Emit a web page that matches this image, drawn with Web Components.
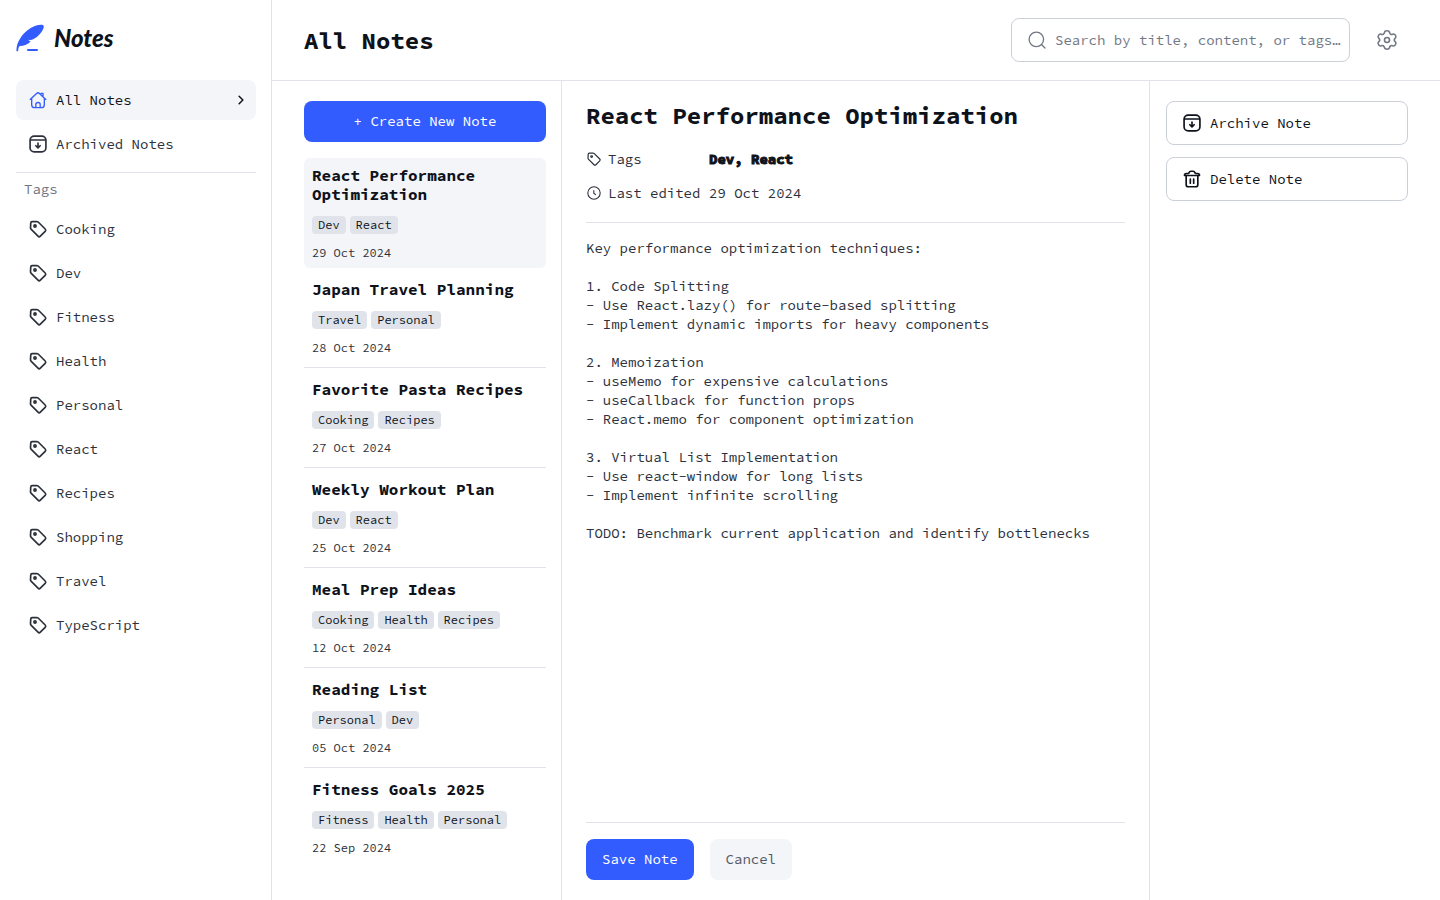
<!DOCTYPE html>
<html lang="en">
<head>
<meta charset="utf-8">
<meta name="viewport" content="width=device-width, initial-scale=1">
<title>Notes</title>
<style>
:root{--n950:#0e121b;--n800:#232530;--n700:#2b303b;--n600:#525866;--n500:#717784;--n300:#cacfd8;--n200:#e0e4ea;--n100:#f3f5f8;--blue:#335cff}
body{margin:0;background:#fff;color:var(--n950);font:14px/19px "Source Code Pro","Liberation Mono",monospace}
</style>
</head>
<body>
<notes-app></notes-app>
<script>
const BASE = `*{box-sizing:border-box}h1,h2,h3,p,ul,dl,dd{margin:0;padding:0}ul{list-style:none}a{color:inherit;text-decoration:none}button,input,textarea{font:inherit;color:inherit;margin:0}button{cursor:pointer}`;

class Base extends HTMLElement {
  connectedCallback() {
    if (this.shadowRoot) return;
    const t = document.createElement('template');
    t.innerHTML = `<style>${BASE}${this.css()}</style>${this.html()}`;
    this.attachShadow({ mode: 'open' }).append(t.content.cloneNode(true));
  }
}

const ICONS = {
  home: '<path d="M2.6 11.3 10.3 4.1Q12 2.6 13.7 4.1L21.4 11.3M4.4 10V17.6Q4.4 21.2 8 21.2H16Q19.6 21.2 19.6 17.6V10M9.4 21V17.2Q9.4 15 12 15T14.6 17.2V21M15.6 4H18V7.5"/>',
  archive: '<rect x="2.5" y="2.5" width="19" height="19" rx="5"/><path d="M3.2 7.2H20.8M12 11V16.2M9.4 14.1 12 16.6 14.6 14.1"/>',
  tag: '<path d="M3.3 4.9Q3.4 3.3 5 3.2L10.4 3Q11.6 3 12.5 3.9L20.6 12Q22 13.4 20.6 14.8L14.8 20.6Q13.4 22 12 20.6L3.9 12.5Q3 11.6 3 10.4Z"/><circle cx="8.4" cy="8.4" r="1.3"/>',
  chevron: '<path d="m9.5 7 5 5-5 5"/>',
  search: '<circle cx="11.2" cy="11.2" r="8.7"/><path d="m17.6 17.6 4 4"/>',
  clock: '<circle cx="12" cy="12" r="9.3"/><path d="M11.7 8.2V12.4L14.4 14.4"/>',
  trash: '<path d="M5 8V18.5Q5 21.3 7.8 21.3H16.2Q19 21.3 19 18.5V8M3 7.8Q3 5.4 5.2 5.4H7.2Q8 5.4 8.5 4.3 9.2 2.7 10.7 2.7H13.3Q14.8 2.7 15.5 4.3 16 5.4 16.8 5.4H18.8Q21 5.4 21 7.8ZM10 12V17M14 12V17"/>',
  gear: '<path d="M9.4 4.6C9.8 2.2 14.2 2.2 14.6 4.6C14.9 6.2 16.2 6.9 17.7 6.2C20 5.2 22 8.8 20.2 10.3C18.9 11.4 18.9 12.6 20.2 13.7C22 15.2 20 18.8 17.7 17.8C16.2 17.1 14.9 17.8 14.6 19.4C14.2 21.8 9.8 21.8 9.4 19.4C9.1 17.8 7.8 17.1 6.3 17.8C4 18.8 2 15.2 3.8 13.7C5.1 12.6 5.1 11.4 3.8 10.3C2 8.8 4 5.2 6.3 6.2C7.8 6.9 9.1 6.2 9.4 4.6Z"/><circle cx="12" cy="12" r="2.5"/>'
};

customElements.define('app-icon', class extends Base {
  css() { return `:host{display:block;flex:none;width:20px;height:20px}svg{display:block;width:100%;height:100%;fill:none;stroke:currentColor;stroke-width:${this.getAttribute('stroke') || 2};stroke-linecap:round;stroke-linejoin:round}`; }
  html() { return `<svg viewBox="0 0 24 24" aria-hidden="true">${ICONS[this.getAttribute('name')]}</svg>`; }
});

customElements.define('app-logo', class extends Base {
  css() { return `:host{display:block}a{display:flex;align-items:center;gap:10px;height:28px;font:italic 900 24px/28px Lato,sans-serif;color:var(--n950)}svg{width:28px;height:28px;fill:var(--blue)}`; }
  html() { return `<a href="#"><svg viewBox="0 0 28 28" aria-hidden="true"><path d="M.4 26.4C.5 21.5 2 17.6 4.2 14.4 7.6 8.6 13.6 4 19.4 1.8 22.2.8 25 .5 26.8.9 28 1.5 28 3 27.2 5 25.4 9.4 21.6 12.9 17.6 15 15.8 16 14 16.1 12.3 15.7 12.6 16.6 13.6 17.2 14.8 17.3 12.4 20.4 8 22 3.8 22 2.6 23 2.3 24.4 2.2 26.4 2 27.6.6 27.6.4 26.4Z"/><rect x="11" y="25" width="11" height="2" rx="1"/></svg><span>Notes</span></a>`; }
});

customElements.define('nav-item', class extends Base {
  css() { return `:host{display:block}a{display:flex;align-items:center;gap:8px;height:40px;padding:0 6px 0 12px;border-radius:8px;color:var(--n700)}span{flex:1}
    :host([active]) a{background:var(--n100);color:var(--n950)}:host([active]) .lead{color:var(--blue)}app-icon.end{width:18px;height:18px}`; }
  html() { return `<a href="#"><app-icon class="lead" name="${this.getAttribute('icon')}" ${this.hasAttribute('active') ? 'stroke="1.6"' : ''}></app-icon><span><slot></slot></span>${this.hasAttribute('active') ? '<app-icon class="end" name="chevron"></app-icon>' : ''}</a>`; }
});

customElements.define('app-sidebar', class extends Base {
  css() { return `:host{display:block;border-right:1px solid var(--n200);padding:24px 15px 24px 16px}nav{padding-top:28px}ul{display:grid;gap:4px}
    h2{font-size:14px;line-height:19px;font-weight:400;color:var(--n500);margin:8px 0 10px;padding:7px 8px 0;border-top:1px solid var(--n200)}`; }
  html() {
    const tags = ['Cooking', 'Dev', 'Fitness', 'Health', 'Personal', 'React', 'Recipes', 'Shopping', 'Travel', 'TypeScript'];
    return `<app-logo></app-logo><nav><ul><li><nav-item icon="home" active>All Notes</nav-item></li><li><nav-item icon="archive">Archived Notes</nav-item></li></ul>
    <h2>Tags</h2><ul>${tags.map(t => `<li><nav-item icon="tag">${t}</nav-item></li>`).join('')}</ul></nav>`;
  }
});

customElements.define('app-header', class extends Base {
  css() { return `:host{display:flex;align-items:center;gap:16px;min-height:81px;padding:0 32px;border-bottom:1px solid var(--n200)}h1{flex:1;font-size:24px;line-height:29px;font-weight:700}
    label{display:flex;align-items:center;gap:8px;width:339px;height:44px;padding:0 4px 0 15px;border:1px solid var(--n300);border-radius:8px;color:var(--n500)}
    input{flex:1;min-width:0;border:0;padding:0;outline:0;background:none;text-overflow:ellipsis}input::placeholder{color:var(--n500);opacity:1}
    button{display:grid;place-items:center;width:42px;height:42px;padding:0;border:0;background:none;color:var(--n500)}button app-icon{width:24px;height:24px}`; }
  html() { return `<h1>All Notes</h1><label><app-icon name="search" stroke="1.6"></app-icon><input type="text" aria-label="Search notes" placeholder="Search by title, content, or tags…"></label><button type="button" aria-label="Settings"><app-icon name="gear" stroke="1.6"></app-icon></button>`; }
});

customElements.define('app-button', class extends Base {
  css() { return `:host{display:block}button{display:flex;align-items:center;justify-content:center;gap:8px;width:100%;min-height:41px;padding:0 16px;border:0;border-radius:8px;background:var(--blue);color:#fff;white-space:nowrap}
    :host([kind=muted]) button{background:var(--n100);color:var(--n600)}
    :host([kind=outline]) button{justify-content:flex-start;min-height:44px;padding:0 15px;border:1px solid var(--n300);background:#fff;color:var(--n950)}`; }
  html() { const i = this.getAttribute('icon'); return `<button type="button">${i ? `<app-icon name="${i}"></app-icon>` : ''}<slot></slot></button>`; }
});

customElements.define('note-card', class extends Base {
  css() { return `:host{display:block}a{display:grid;gap:12px;padding:8px;border-radius:6px}:host([active]) a{background:var(--n100)}
    h3{font-size:16px;line-height:19px;font-weight:700}div{display:flex;flex-wrap:wrap;gap:4px;font-size:12px;line-height:14px}
    div span{padding:2px 6px;border-radius:4px;background:var(--n200)}time{font-size:12px;line-height:14px;color:var(--n700)}`; }
  html() { return `<a href="#"><h3><slot></slot></h3><div>${this.getAttribute('tags').split(',').map(t => `<span>${t}</span>`).join('')}</div><time>${this.getAttribute('date')}</time></a>`; }
});

customElements.define('note-list', class extends Base {
  css() { return `:host{display:block;padding:20px 15px 20px 32px;border-right:1px solid var(--n200)}ul{margin-top:16px}li+li{padding:4px 0;border-bottom:1px solid var(--n200)}li:last-child{border-bottom:0}`; }
  html() {
    const notes = [
      ['React Performance Optimization', 'Dev,React', '29 Oct 2024'],
      ['Japan Travel Planning', 'Travel,Personal', '28 Oct 2024'],
      ['Favorite Pasta Recipes', 'Cooking,Recipes', '27 Oct 2024'],
      ['Weekly Workout Plan', 'Dev,React', '25 Oct 2024'],
      ['Meal Prep Ideas', 'Cooking,Health,Recipes', '12 Oct 2024'],
      ['Reading List', 'Personal,Dev', '05 Oct 2024'],
      ['Fitness Goals 2025', 'Fitness,Health,Personal', '22 Sep 2024']
    ];
    return `<app-button>+ Create New Note</app-button><ul>${notes.map(([t, g, d], i) => `<li><note-card tags="${g}" date="${d}"${i ? '' : ' active'}>${t}</note-card></li>`).join('')}</ul>`;
  }
});

customElements.define('note-editor', class extends Base {
  css() { return `:host{display:flex;flex-direction:column;min-width:0;padding:20px 24px;border-right:1px solid var(--n200)}
    h2{font-size:24px;line-height:29px;font-weight:700;margin-bottom:12px}
    .meta{display:grid;grid-template-columns:115px 1fr;column-gap:8px;grid-auto-rows:34px;align-items:center;padding-bottom:12px;border-bottom:1px solid var(--n200);color:var(--n700)}
    .key{display:flex;align-items:center;gap:6px;white-space:nowrap}.key app-icon{width:16px;height:16px}
    input{width:100%;border:0;padding:0;outline:0;background:none;font-weight:700;color:var(--n950);-webkit-text-stroke:1px var(--n950)}
    textarea{flex:1;display:block;width:100%;min-height:360px;margin:16px 0;padding:0;border:0;outline:0;resize:none;background:none;color:var(--n700)}
    footer{display:flex;gap:16px;padding-top:16px;border-top:1px solid var(--n200)}`; }
  html() { return `<h2>React Performance Optimization</h2>
<div class="meta"><label class="key" for="tags"><app-icon name="tag" stroke="1.8"></app-icon>Tags</label><input id="tags" value="Dev, React">
<span class="key"><app-icon name="clock" stroke="1.6"></app-icon>Last edited</span><time datetime="2024-10-29">29 Oct 2024</time></div>
<textarea aria-label="Note content" spellcheck="false">Key performance optimization techniques:

1. Code Splitting
- Use React.lazy() for route-based splitting
- Implement dynamic imports for heavy components

2. Memoization
- useMemo for expensive calculations
- useCallback for function props
- React.memo for component optimization

3. Virtual List Implementation
- Use react-window for long lists
- Implement infinite scrolling

TODO: Benchmark current application and identify bottlenecks</textarea>
<footer><app-button>Save Note</app-button><app-button kind="muted">Cancel</app-button></footer>`; }
});

customElements.define('note-actions', class extends Base {
  css() { return `:host{display:flex;flex-direction:column;gap:12px;padding:20px 32px 20px 16px}`; }
  html() { return `<app-button kind="outline" icon="archive">Archive Note</app-button><app-button kind="outline" icon="trash">Delete Note</app-button>`; }
});

customElements.define('notes-app', class extends Base {
  css() { return `:host{display:grid;grid-template-columns:272px minmax(0,1fr);min-height:100vh}.page{display:grid;grid-template-rows:auto 1fr}main{display:grid;grid-template-columns:290px minmax(0,1fr) 290px}`; }
  html() { return `<app-sidebar></app-sidebar><div class="page"><app-header></app-header><main><note-list></note-list><note-editor></note-editor><note-actions></note-actions></main></div>`; }
});
</script>
</body>
</html>
